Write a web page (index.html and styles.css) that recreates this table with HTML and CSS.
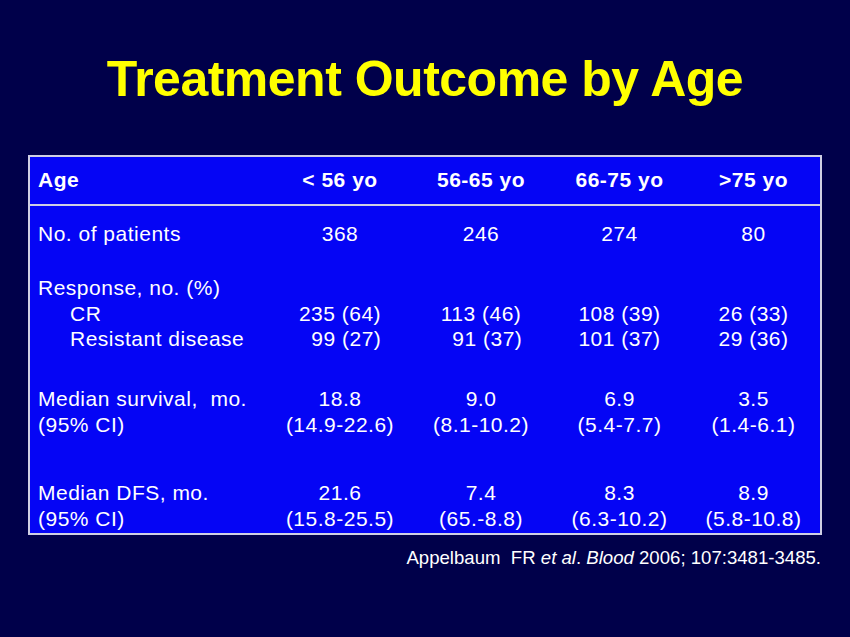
FILE: index.html
```html
<!DOCTYPE html>
<html>
<head>
<meta charset="utf-8">
<title>Treatment Outcome by Age</title>
<link rel="stylesheet" href="styles.css">
</head>
<body>
<div class="slide">
  <h1 class="title">Treatment Outcome by Age</h1>
  <div class="outcome-table">
    <div class="row head">
      <div class="label">Age</div>
      <div class="num">&lt; 56 yo</div>
      <div class="num">56-65 yo</div>
      <div class="num">66-75 yo</div>
      <div class="num">&gt;75 yo</div>
    </div>
    <div class="body">
      <div class="row">
        <div class="label">No. of patients</div>
        <div class="num">368</div>
        <div class="num">246</div>
        <div class="num">274</div>
        <div class="num">80</div>
      </div>
      <div class="row gap-response">
        <div class="label">Response, no. (%)</div>
        <div class="num"></div>
        <div class="num"></div>
        <div class="num"></div>
        <div class="num"></div>
      </div>
      <div class="row">
        <div class="label indent">CR</div>
        <div class="num">235 (64)</div>
        <div class="num">113 (46)</div>
        <div class="num">108 (39)</div>
        <div class="num">26 (33)</div>
      </div>
      <div class="row">
        <div class="label indent">Resistant disease</div>
        <div class="num">&nbsp;&nbsp;99 (27)</div>
        <div class="num">&nbsp;&nbsp;91 (37)</div>
        <div class="num">101 (37)</div>
        <div class="num">29 (36)</div>
      </div>
      <div class="row gap-survival">
        <div class="label">Median survival,&nbsp; mo.</div>
        <div class="num">18.8</div>
        <div class="num">9.0</div>
        <div class="num">6.9</div>
        <div class="num">3.5</div>
      </div>
      <div class="row">
        <div class="label">(95% CI)</div>
        <div class="num">(14.9-22.6)</div>
        <div class="num">(8.1-10.2)</div>
        <div class="num">(5.4-7.7)</div>
        <div class="num">(1.4-6.1)</div>
      </div>
      <div class="row gap-dfs">
        <div class="label">Median DFS, mo.</div>
        <div class="num">21.6</div>
        <div class="num">7.4</div>
        <div class="num">8.3</div>
        <div class="num">8.9</div>
      </div>
      <div class="row">
        <div class="label">(95% CI)</div>
        <div class="num">(15.8-25.5)</div>
        <div class="num">(65.-8.8)</div>
        <div class="num">(6.3-10.2)</div>
        <div class="num">(5.8-10.8)</div>
      </div>
    </div>
  </div>
  <p class="citation">Appelbaum&nbsp; FR <em>et al</em>. <em>Blood</em> 2006; 107:3481-3485.</p>
</div>
</body>
</html>
```

FILE: styles.css
```css
html, body {
  margin: 0;
  padding: 0;
  background: #00004a;
}

.slide {
  width: 850px;
  height: 637px;
  box-sizing: border-box;
  padding-top: 49px;
  background: #00004a;
  font-family: "Liberation Sans", Arial, sans-serif;
  color: #ffffff;
  overflow: hidden;
}

.title {
  margin: 0;
  font-size: 50px;
  line-height: 60px;
  font-weight: bold;
  letter-spacing: -0.5px;
  color: #ffff00;
  text-align: center;
}

.outcome-table {
  margin: 46px 0 0 28px;
  width: 794px;
  box-sizing: border-box;
  border: 2px solid #cfcfe3;
  background: #0505f5;
  font-size: 21px;
  letter-spacing: 0.5px;
}

.row {
  display: grid;
  grid-template-columns: 232px 140px 142px 135px 133px;
  padding-left: 8px;
  line-height: 25.5px;
  white-space: nowrap;
}

.row.head {
  font-weight: bold;
  line-height: 27px;
  padding-top: 9px;
  padding-bottom: 11px;
  border-bottom: 2px solid #cfcfe3;
}

.body {
  padding-top: 15px;
  padding-bottom: 2px;
}

.num {
  text-align: center;
}

.indent {
  padding-left: 32px;
}

.gap-response {
  margin-top: 28.5px;
}

.gap-survival {
  margin-top: 34.5px;
}

.gap-dfs {
  margin-top: 43px;
}

.citation {
  margin: 11.5px 0 0 0;
  width: 821px;
  text-align: right;
  font-size: 18.6px;
  line-height: 22px;
  color: #ffffff;
}

.citation em {
  font-style: italic;
}
```
